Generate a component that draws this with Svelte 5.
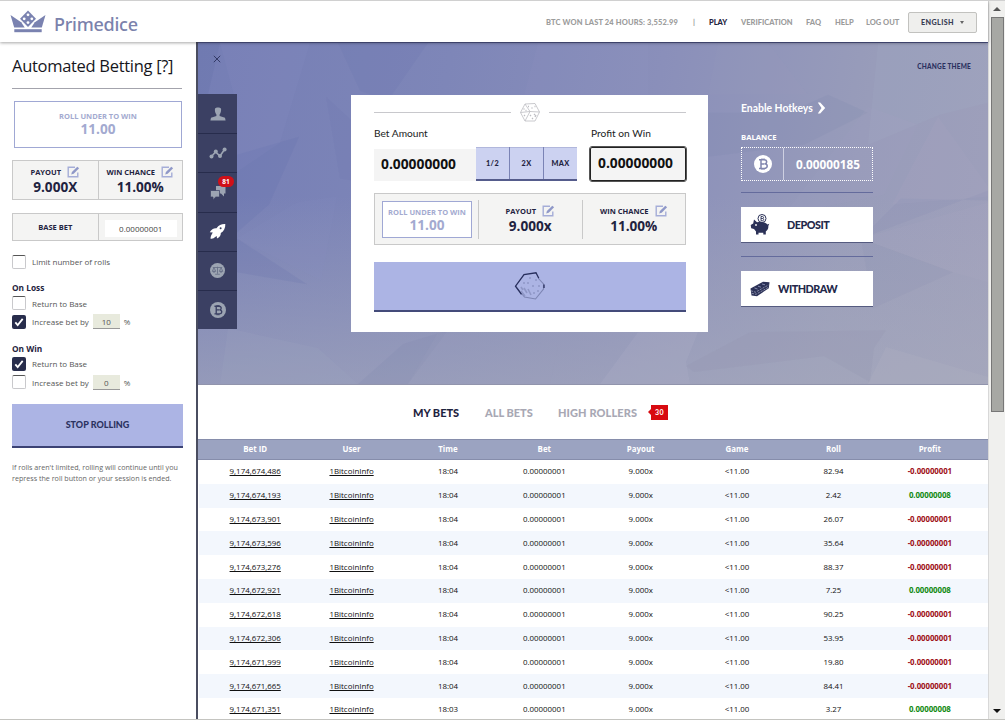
<script lang="ts">
  let lossReturn = $state(false);
  let lossIncrease = $state(true);
  let winReturn = $state(true);
  let winIncrease = $state(false);
  let limitRolls = $state(false);

  const columns = ["Bet ID", "User", "Time", "Bet", "Payout", "Game", "Roll", "Profit"];

  const bets = [
    { id: "9,174,674,486", time: "18:04", roll: "82.94", won: false },
    { id: "9,174,674,193", time: "18:04", roll: "2.42", won: true },
    { id: "9,174,673,901", time: "18:04", roll: "26.07", won: false },
    { id: "9,174,673,596", time: "18:04", roll: "35.64", won: false },
    { id: "9,174,673,276", time: "18:04", roll: "88.37", won: false },
    { id: "9,174,672,921", time: "18:04", roll: "7.25", won: true },
    { id: "9,174,672,618", time: "18:04", roll: "90.25", won: false },
    { id: "9,174,672,306", time: "18:04", roll: "53.95", won: false },
    { id: "9,174,671,999", time: "18:04", roll: "19.80", won: false },
    { id: "9,174,671,665", time: "18:04", roll: "84.41", won: false },
    { id: "9,174,671,351", time: "18:03", roll: "3.27", won: true },
  ];
</script>

{#snippet edit()}
  <svg viewBox="0 0 13 12" width="13" height="12">
    <path d="M8 1.2H1.2v9.6h9.6V6.5" fill="none" stroke="#a5add8" stroke-width="1.4" />
    <path d="M4.2 8.4l.7-2.4L10.3.7l1.8 1.6-5.4 5.4z" fill="#8f98c8" />
  </svg>
{/snippet}

{#snippet coin(size, fill, ink)}
  <svg viewBox="0 0 18 18" width={size} height={size}>
    <circle cx="9" cy="9" r="9" {fill} />
    <path
      d="M5 4.8h4.8c3.6 0 3.7 3.5 1 4 3.4.4 3.2 4.6-.6 4.6H5M7 4.8v8.6M7 8.9h3.4M8 3.4v1.4M10 3.4v1.4M8 13.4v1.4M10 13.4v1.4"
      fill="none"
      stroke={ink}
      stroke-width="1.5"
    />
  </svg>
{/snippet}

{#snippet check(on, toggle)}
  <button class="check" class:on onclick={toggle} aria-label="toggle">
    {#if on}
      <svg viewBox="0 0 14 14" width="14" height="14">
        <path d="M3.3 7.4l2.4 2.7 5-6.2" fill="none" stroke="#fff" stroke-width="1.8" />
      </svg>
    {/if}
  </button>
{/snippet}

<div class="window">
  <div class="page">
    <header>
      <svg viewBox="0 0 36 24" width="36" height="24">
        <g fill="#7a82b0">
          <path d="M.5 5l10.7 7.2 3.5 5.3H4.2z" />
          <path d="M35.5 5l-10.7 7.2-3.5 5.3h10.5z" />
          <path d="M18 .6l8 8.2-8 8.2-8-8.2z" />
          <path d="M4.3 19.2h27.400v3H4.300z" />
        </g>
        <g fill="#fff">
          <circle cx="18" cy="4.8" r="1.4" />
          <circle cx="14.2" cy="8.8" r="1.4" />
          <circle cx="21.8" cy="8.8" r="1.4" />
          <circle cx="18" cy="12.6" r="1.4" />
        </g>
      </svg>
      <span class="brand">Primedice</span>
      <nav>
        <span class="won">BTC WON LAST 24 HOURS: 3,552.99</span>
        <span class="bar">|</span>
        <span class="play">PLAY</span>
        <span class="verification">VERIFICATION</span>
        <span class="faq">FAQ</span>
        <span class="help">HELP</span>
        <span class="logout">LOG OUT</span>
      </nav>
      <button class="language">ENGLISH <i></i></button>
    </header>

    <div class="body">
      <aside>
        <h1>Automated Betting [?]</h1>

        <div class="target">
          <small>ROLL UNDER TO WIN</small>
          <b>11.00</b>
        </div>

        <div class="pair">
          <div class="stat">
            <small>PAYOUT {@render edit()}</small>
            <b>9.000X</b>
          </div>
          <div class="stat">
            <small>WIN CHANCE {@render edit()}</small>
            <b>11.00%</b>
          </div>
        </div>

        <div class="pair base">
          <small>BASE BET</small>
          <div class="base-value"><span>0.00000001</span></div>
        </div>

        <div class="option limit">
          {@render check(limitRolls, () => (limitRolls = !limitRolls))}
          <span>Limit number of rolls</span>
        </div>

        <h2>On Loss</h2>
        <div class="option">
          {@render check(lossReturn, () => (lossReturn = !lossReturn))}
          <span>Return to Base</span>
        </div>
        <div class="option">
          {@render check(lossIncrease, () => (lossIncrease = !lossIncrease))}
          <span>Increase bet by</span>
          <em>10</em>
          <span>%</span>
        </div>

        <h2 class="win">On Win</h2>
        <div class="option">
          {@render check(winReturn, () => (winReturn = !winReturn))}
          <span>Return to Base</span>
        </div>
        <div class="option">
          {@render check(winIncrease, () => (winIncrease = !winIncrease))}
          <span>Increase bet by</span>
          <em>0</em>
          <span>%</span>
        </div>

        <button class="stop">STOP ROLLING</button>
        <p>If rolls aren't limited, rolling will continue until you<br />repress the roll button or your session is ended.</p>
      </aside>

      <main>
        <section class="hero">
          <svg class="facets" viewBox="0 0 790 342" preserveAspectRatio="none">
            <path d="M0 0h22L8 60 0 110z" fill="#5d67a5" opacity=".25" />
            <path d="M22 0h90l-30 100-44 30V60z" fill="#8f97cc" opacity=".2" />
            <path d="M140 0h90l-40 58-28-10z" fill="#5c68a8" opacity=".16" />
            <path d="M39 112l62-18-30 68-32 28z" fill="#5c68a8" opacity=".22" />
            <path d="M39 196l60-36 40-6-16 84z" fill="#9198cb" opacity=".16" />
            <path d="M39 196l70 46-70-12z" fill="#5c68a8" opacity=".22" />
            <path d="M128 54l26 24v60l-12-2z" fill="#5c68a8" opacity=".13" />
            <path d="M340 0h110v52H326z" fill="#9b9bd0" opacity=".16" />
            <path d="M520 0h50l40 52H510z" fill="#a0a0c8" opacity=".14" />
            <path d="M680 0h110v60l-48 12-72 30z" fill="#a7b2ca" opacity=".25" />
            <path d="M510 70l80 0 40-18 40 18-64 32-96 12z" fill="#7180ac" opacity=".2" />
            <path d="M670 64l50 18-34 70-100 20z" fill="#b0abc9" opacity=".15" />
            <path d="M694 162l46-88 50 70v10z" fill="#b7b2cc" opacity=".18" />
            <path d="M663 196l40-40 87 2v-10z" fill="#7981ad" opacity=".18" />
            <path d="M663 196l92 34-80 36z" fill="#8589ad" opacity=".18" />
            <path d="M663 196l127-36v80l-35-10z" fill="#b9b4c9" opacity=".15" />
            <path d="M30 286l90 20 40 36H22z" fill="#a2abc7" opacity=".25" />
            <path d="M160 342l45-40 45-14-40 54z" fill="#7882ab" opacity=".24" />
            <path d="M240 290l120 14-8 38H210z" fill="#9a9dba" opacity=".28" />
            <path d="M440 290h60l-12 30 4 22h-90z" fill="#c2c3db" opacity=".2" />
            <path d="M488 324l64-34 136-2-12 18-4 34-46-26-130 16z" fill="#8f91ad" opacity=".25" />
            <path d="M688 305l102 30v7H670z" fill="#bcbbc8" opacity=".28" />
          </svg>

          <ul class="rail">
            <li>
              <svg viewBox="0 0 16 14" width="16" height="14" fill="#9ca4b2">
                <path d="M5 1.5C5.8 0 10.2 0 11 1.5c.4 2-.2 4.5-1.4 6V9l5.4 1.800.6 2.600H.4L1 10.800 6.400 9V7.500C5.200 6 4.600 3.500 5 1.500z" />
              </svg>
            </li>
            <li>
              <svg viewBox="0 0 18 12" width="18" height="12" fill="#9ca4b2">
                <path d="M2.5 9.500L6.500 5l4.500 4 4.500-6.500" fill="none" stroke="#9ca4b2" stroke-width="1.6" />
                <circle cx="2.5" cy="9.5" r="2" />
                <circle cx="6.8" cy="4.6" r="2" />
                <circle cx="11" cy="9" r="2" />
                <circle cx="15.6" cy="2.5" r="2" />
              </svg>
            </li>
            <li>
              <svg viewBox="0 0 16 15" width="16" height="15" fill="#9ca4b2">
                <path d="M6 1h9.500v7.500H14v3l-3-3H6z" />
                <path d="M.5 5.500h9v6.500H5.800L3 14.700V12H.5z" stroke="#3b4063" stroke-width=".7" />
              </svg>
              <span class="count">81</span>
            </li>
            <li>
              <svg viewBox="0 0 17 17" width="17" height="17" fill="#fff">
                <path d="M16.300 1c-3.600-.2-6.600 1-8.800 4.300C4.600 5 2.500 6.600.8 9.300l3 .1-1.400 2.700c-.7 1.200-.9 2.600-.8 3.700 1.300 0 2.800-.4 3.900-1.400l2.200-1.300.3 2.500c2.600-1.400 3.900-3.100 3.800-5.600C15 8.300 16.500 5 16.300 1z" />
                <circle cx="11.600" cy="5.300" r="1" fill="#3b4063" />
              </svg>
            </li>
            <li>
              <svg viewBox="0 0 16 16" width="15" height="15">
                <circle cx="8" cy="8" r="8" fill="#9ca4b2" />
                <path d="M3 4.800h10M8 4v7.500M5.500 12h5M4.200 5L2.500 8.800h3.600zM11.800 5l-1.800 3.800h3.600z" fill="none" stroke="#666e86" stroke-width=".9" />
                <path d="M2.400 8.800h3.800L5 10.200H3.500zM9.900 8.800h3.800l-1.200 1.400H11z" fill="#666e86" />
              </svg>
            </li>
            <li>{@render coin(16, "#9ca4b2", "#3b4063")}</li>
          </ul>

          <div class="close">
            <svg viewBox="0 0 8 8" width="8" height="8">
              <path d="M.8.8l6.400 6.400M7.200.8L.8 7.200" stroke="#333a66" stroke-width="1" />
            </svg>
          </div>

          <div class="card">
            <div class="rule">
              <svg viewBox="0 0 20 19" width="20" height="19" fill="none" stroke="#bdbdc2" stroke-width=".8">
                <path d="M5 1l10-.5L19.500 9 15 18H5L.5 9.500zM5 1l5 7.500L19.500 9M10 8.500L5 18M.5 9.500L10 8.500" />
                <path d="M8 3.500h1M11.500 5h1M14.500 3.500h1M3.500 6h1M5.500 7.500h1M10 12l1 1M12 15l1 1M14 11l1 1M4 12l1 1M16 12l-1 2" stroke-width="1.3" />
              </svg>
            </div>
            <div class="labels">
              <span class="bet-label">Bet Amount</span>
              <span>Profit on Win</span>
            </div>
            <div class="inputs">
              <div class="amount">0.00000000</div>
              <div class="multipliers">
                <button>1/2</button>
                <button>2X</button>
                <button>MAX</button>
              </div>
              <div class="profit">0.00000000</div>
            </div>
            <div class="stats">
              <div class="target">
                <small>ROLL UNDER TO WIN</small>
                <b>11.00</b>
              </div>
              <div class="stat">
                <small>PAYOUT {@render edit()}</small>
                <b>9.000x</b>
              </div>
              <div class="stat">
                <small>WIN CHANCE {@render edit()}</small>
                <b>11.00%</b>
              </div>
            </div>
            <button class="roll" aria-label="Roll">
              <svg viewBox="0 0 32 30" width="32" height="30" fill="none">
                <path d="M24.500 7.500l5 5.500v5L21.500 28l-11-2L1.500 15" stroke="#7d85b3" stroke-width="1.1" />
                <path d="M7.500 23.300L1.500 15.200 10 3.500l12-1.700 2.800 5.500M30 13.500v3.500" stroke="#272e5c" stroke-width="1.3" />
                <path
                  d="M15 7h2M21 9h2M13 12h2M18 15h2M24 15h2M9 12h2M23 20h2M19 22h2M7 16l2 3M10 17l3 5M14 18l3 6M7 20l4 5"
                  stroke="#8f97c6"
                  stroke-width="1.6"
                />
              </svg>
            </button>
          </div>

          <div class="account">
            <span class="theme">CHANGE THEME</span>
            <div class="hotkeys">
              <span>Enable Hotkeys</span>
              <svg viewBox="0 0 9 12" width="9" height="12">
                <path d="M.8.5h2.400L8.200 6l-5 5.500H.8L4.500 6z" fill="#fff" />
              </svg>
            </div>
            <div class="balance-label">BALANCE</div>
            <div class="balance">
              <div class="coin">{@render coin(18, "#fff", "#8085ae")}</div>
              <div class="value">0.00000185</div>
            </div>
            <button class="cash deposit">
              <svg viewBox="0 0 20 21" width="20" height="21">
                <circle cx="12" cy="4.500" r="4" fill="#fff" stroke="#2b3157" />
                <path d="M11 2.500h1.500c1.400 0 1.400 2 0 2 1.600 0 1.600 2.200 0 2.200H11zM11 4.500h1.500" fill="none" stroke="#2b3157" stroke-width=".9" />
                <path d="M4 5.500l3 2.700c3-.6 8-.6 10.500 2.300l1.800-.8-1 2.400c.3 2.400-.8 4.200-2.500 5.400v3h-2.500v-1.800H8.500v1.800H6v-3L4 15l-2.800-.8L.7 11l2.500-1.500z" fill="#2b3157" />
                <circle cx="6" cy="11" r=".9" fill="#fff" />
              </svg>
              <span>DEPOSIT</span>
            </button>
            <button class="cash withdraw">
              <svg viewBox="0 0 20 16" width="20" height="16">
                <path d="M.5 7.500L13 .8l6.500.4-.7 6L7 15.200l-5.500-.7z" fill="#2b3157" />
                <path d="M1 9.800l4.500 1.400L18.500 4M1.800 12.300l4.200 1L18.500 6.300" fill="none" stroke="#c3c6da" stroke-width=".6" stroke-dasharray="2.200 1" />
                <path d="M4.500 7l3 1M8 5.200l3 1M12 3l3 .8" stroke="#8f94b8" stroke-width=".9" />
              </svg>
              <span>WITHDRAW</span>
            </button>
          </div>
        </section>

        <div class="tabs">
          <span class="mine">MY BETS</span>
          <span class="all">ALL BETS</span>
          <span class="high">HIGH ROLLERS</span>
          <span class="flag">30</span>
        </div>

        <div class="table">
          <div class="row head">
            {#each columns as column}
              <span>{column}</span>
            {/each}
          </div>
          {#each bets as bet}
            <div class="row">
              <span><u>{bet.id}</u></span>
              <span><u>1BitcoinInfo</u></span>
              <span>{bet.time}</span>
              <span>0.00000001</span>
              <span>9.000x</span>
              <span>&lt;11.00</span>
              <span>{bet.roll}</span>
              <span class={bet.won ? "gain" : "loss"}>{bet.won ? "0.00000008" : "-0.00000001"}</span>
            </div>
          {/each}
        </div>
      </main>
    </div>
  </div>

  <div class="scrollbar">
    <svg viewBox="0 0 8 4" width="8" height="4"><path d="M0 4l4-4 4 4z" fill="#555" /></svg>
    <div class="thumb"></div>
    <svg viewBox="0 0 8 4" width="8" height="4"><path d="M0 0l4 4 4-4z" fill="#111" /></svg>
  </div>
</div>

<style>
  :global(body) {
    background: #fff;
    overflow: hidden;
  }
  * {
    box-sizing: border-box;
  }
  svg {
    display: block;
    flex: none;
  }
  button {
    padding: 0;
    border: none;
    border-radius: 0;
    font: inherit;
    color: inherit;
  }
  .window {
    display: flex;
    width: 1005px;
    height: 720px;
    overflow: hidden;
    border-top: 1px solid #d0d0d0;
    border-bottom: 1px solid #c4c4c0;
    font-family: "Open Sans", sans-serif;
    color: #1f2340;
  }
  .page {
    width: 988px;
    display: flex;
    flex-direction: column;
  }

  header {
    height: 41px;
    flex: none;
    display: flex;
    align-items: center;
    padding: 0 11px 0 10px;
    position: relative;
    box-shadow: 0 1px 3px rgba(0, 0, 0, 0.35);
    z-index: 1;
    background: #fff;
  }
  .brand {
    margin-left: 8px;
    margin-top: 4px;
    font: 500 18px/24px "Noto Sans", sans-serif;
    letter-spacing: -0.25px;
    color: #7b82ac;
  }
  nav {
    display: flex;
    margin-left: auto;
    font: 900 7.5px/12px Lato, sans-serif;
    color: #9c9c9c;
    white-space: nowrap;
    padding-top: 2px;
  }
  .won {
    width: 147px;
    letter-spacing: 0.15px;
  }
  .bar {
    width: 16px;
  }
  .play {
    width: 32px;
    color: #1f2340;
  }
  .verification {
    width: 65px;
  }
  .faq {
    width: 29px;
  }
  .help {
    width: 31px;
  }
  .logout {
    width: 42px;
  }
  .language {
    width: 69px;
    height: 21px;
    margin-top: 2px;
    border: 1px solid #c2c2bf;
    border-radius: 2px;
    background: #efefed;
    font: 900 7.2px/12px Lato, sans-serif;
    letter-spacing: 0.4px;
    display: flex;
    align-items: center;
    justify-content: center;
    gap: 6px;
    color: #3a3d55;
  }
  .language i {
    border: 2.5px solid transparent;
    border-top: 3px solid #666;
    border-bottom: none;
  }

  .body {
    flex: 1;
    min-height: 0;
    display: flex;
  }
  aside {
    width: 198px;
    flex: none;
    padding: 12px 14px 0 12px;
    border-right: 2px solid #4a4d60;
  }
  h1 {
    margin: 0 0 12px;
    height: 35px;
    border-bottom: 1px solid #a3a3ac;
    font-size: 16.5px;
    font-weight: 400;
    letter-spacing: -0.3px;
    line-height: 23px;
    color: #16161c;
    white-space: nowrap;
  }
  small {
    display: flex;
    align-items: center;
    justify-content: center;
    font-size: 7.5px;
    font-weight: 700;
    line-height: 10px;
    white-space: nowrap;
  }
  b {
    display: block;
    font-size: 13.6px;
    line-height: 16px;
    text-align: center;
  }
  .target {
    border: 1px solid #a0a8d4;
    background: #fff;
    color: #a3aad0;
    display: flex;
    flex-direction: column;
    align-items: center;
  }
  aside .target {
    height: 47px;
    margin: 0 0 12px 2px;
    padding-top: 9px;
    width: 168px;
  }
  .pair {
    display: flex;
    width: 171px;
    height: 40px;
    border: 1px solid #c9c9c9;
    background: #f4f4f3;
  }
  .pair > * {
    width: 50%;
  }
  .pair > * + * {
    border-left: 1px solid #c9c9c9;
  }
  .stat small {
    height: 14px;
    gap: 6px;
  }
  .pair .stat {
    padding-top: 4px;
  }
  .pair .stat b {
    line-height: 15px;
  }
  .base {
    height: 28px;
    margin-top: 13px;
    margin-bottom: 13px;
  }
  .base-value {
    padding: 6px 5px 3px 6px;
    display: flex;
  }
  .base-value span {
    flex: 1;
    background: #fff;
    font-size: 8px;
    line-height: 18px;
    text-align: center;
    color: #444;
  }
  .option {
    display: flex;
    align-items: center;
    height: 18.5px;
    font-size: 8px;
    color: #555;
    white-space: nowrap;
  }
  .option.limit {
    height: 15px;
  }
  .check {
    width: 14px;
    height: 14px;
    flex: none;
    margin-right: 6px;
    border: 1px solid #c9c9cc;
    border-top-color: #555;
    border-radius: 2px;
    background: #fff;
  }
  .check.on {
    border: none;
    background: #282d4c;
  }
  .option em {
    width: 27px;
    height: 15px;
    margin: 0 4px;
    background: #e8eadd;
    border-bottom: 1px solid #999;
    font-style: normal;
    line-height: 15px;
    text-align: center;
  }
  h2 {
    margin: 13px 0 0;
    font-size: 8.3px;
    line-height: 12px;
    color: #1f2340;
  }
  h2.win {
    margin-top: 11.5px;
  }
  .stop {
    display: block;
    width: 171px;
    height: 44px;
    margin-top: 12px;
    background: #acb4e4;
    border-bottom: 2px solid #3b4274;
    font: 900 9px/42px Lato, sans-serif;
    color: #2b3260;
  }
  p {
    margin: 14px 0 0;
    font-size: 7.15px;
    line-height: 11px;
    color: #666;
    white-space: nowrap;
  }

  main {
    width: 790px;
  }
  .hero {
    position: relative;
    height: 343px;
    display: flex;
    border-top: 1px solid #4e5588;
    border-bottom: 1px solid #9194ac;
    background:
      linear-gradient(180deg, rgba(160, 168, 190, 0) 45%, rgba(168, 171, 188, 0.6) 100%),
      linear-gradient(100deg, #757eb5 0%, #7e86b8 30%, #8a8fba 55%, #989cba 80%, #9fa0bb 100%);
  }
  .facets {
    position: absolute;
    inset: 0;
    width: 100%;
    height: 100%;
    opacity: 0.65;
  }
  .hero > div {
    position: relative;
  }
  .rail {
    position: relative;
    list-style: none;
    margin: 51px 0 0;
    padding: 0;
    width: 39px;
    height: 235px;
    display: flex;
    flex-direction: column;
    background: #3b4063;
  }
  .rail li {
    position: relative;
    flex: 1;
    display: flex;
    align-items: center;
    justify-content: center;
    border-top: 1px solid #272c4c;
  }
  .rail li:first-child {
    border-top-color: #3b4063;
  }
  .count {
    position: absolute;
    top: 3px;
    left: 20px;
    width: 16px;
    height: 11px;
    border-radius: 6px;
    background: #d01018;
    color: #fff;
    font: 700 6.5px/11px "Open Sans", sans-serif;
    text-align: center;
  }
  .close {
    width: 114px;
    margin-left: -24px;
    margin-right: 24px;
    padding-top: 12px;
  }
  .card {
    width: 357px;
    height: 237px;
    margin-top: 52px;
    padding: 7px 22px 0 23px;
    background: #fff;
    flex: none;
  }
  .rule {
    display: flex;
    align-items: center;
    gap: 9px;
    height: 20px;
  }
  .rule::before,
  .rule::after {
    content: "";
    flex: 1;
    border-top: 1px solid #c8c8cc;
  }
  .labels {
    display: flex;
    margin-top: 3px;
    height: 22px;
    font: 400 10.2px/16px Lato, sans-serif;
    color: #222;
    white-space: nowrap;
  }
  .bet-label {
    width: 217px;
  }
  .inputs {
    display: flex;
    height: 34px;
  }
  .amount,
  .profit {
    background: #f4f4f4;
    font-size: 13.8px;
    font-weight: 700;
    line-height: 30px;
    color: #111;
  }
  .amount {
    width: 102px;
    height: 32px;
    margin-top: 2px;
    padding-left: 7px;
  }
  .multipliers {
    width: 101px;
    display: flex;
    gap: 1px;
    background: #7a83b5;
    border-bottom: 2px solid #555c8c;
    margin-right: 13px;
  }
  .multipliers button {
    flex: 1;
    background: #ccd2f1;
    border-top: 1px solid #b1b7dc;
    font: 900 7.3px/32px Lato, sans-serif;
    letter-spacing: 0.4px;
  }
  .profit {
    width: 96px;
    border: 1.5px solid #222;
    outline: 0.5px solid #555;
    border-radius: 2px;
    padding-left: 7px;
  }
  .stats {
    display: flex;
    margin-top: 12px;
    height: 52px;
    padding: 6px 0 5px 7px;
    border: 1px solid #c9c9c9;
    background: #f4f4f3;
  }
  .stats .target {
    width: 90px;
    height: 37px;
    margin: 1px 6px 0 0;
    padding-top: 5px;
  }
  .stats .target b {
    line-height: 15px;
  }
  .stats .stat {
    flex: 1;
    border-left: 1px solid #c9c9c9;
    padding-top: 4px;
  }
  .roll {
    display: flex;
    justify-content: center;
    width: 312px;
    height: 50px;
    margin-top: 17px;
    padding-top: 9px;
    background: #acb4e4;
    border-bottom: 2px solid #444b7a;
  }

  .account {
    flex: 1;
    margin-left: 33px;
    color: #fff;
  }
  .theme {
    display: block;
    margin: 18px 17px 0 0;
    font: 900 6.5px/11px Lato, sans-serif;
    letter-spacing: 0.2px;
    text-align: right;
    color: #2b3160;
  }
  .hotkeys {
    display: flex;
    align-items: center;
    gap: 4px;
    margin-top: 27px;
    height: 18px;
    font: 700 10.4px/18px Lato, sans-serif;
  }
  .balance-label {
    margin-top: 14px;
    font-size: 7.7px;
    font-weight: 700;
    line-height: 12px;
  }
  .balance {
    display: flex;
    width: 132px;
    height: 34px;
    margin-top: 4px;
    border: 1px dotted #fff;
  }
  .balance .coin {
    width: 42px;
    display: flex;
    align-items: center;
    justify-content: center;
    border-right: 1px solid #ced0e2;
  }
  .balance .value {
    flex: 1;
    font-size: 11.8px;
    font-weight: 700;
    line-height: 32px;
    text-align: center;
  }
  .cash {
    position: relative;
    display: flex;
    align-items: center;
    width: 132px;
    height: 36px;
    margin-top: 26px;
    padding-left: 9px;
    background: #fff;
    border-bottom: 1px solid #555b80;
    font: 900 10.8px/34px Lato, sans-serif;
    letter-spacing: -0.5px;
    color: #23284a;
  }
  .withdraw {
    margin-top: 28px;
  }
  .cash::before {
    content: "";
    position: absolute;
    left: 0;
    right: 0;
    top: -15px;
    border-top: 1px solid #646b9c;
  }
  .deposit span {
    margin-left: 17px;
  }
  .withdraw span {
    margin-left: 8px;
  }

  .tabs {
    display: flex;
    align-items: center;
    height: 54px;
    padding-left: 215px;
    padding-top: 1px;
    font: 900 11px/16px Lato, sans-serif;
    color: #a8a8b4;
    white-space: nowrap;
  }
  .mine {
    width: 72px;
    color: #1f2340;
  }
  .all {
    width: 73px;
  }
  .high {
    width: 93px;
    letter-spacing: 0.1px;
  }
  .flag {
    position: relative;
    width: 17px;
    height: 15px;
    background: #d80a10;
    color: #fff;
    font: 700 7px/15px Lato, sans-serif;
    letter-spacing: 0.5px;
    text-align: center;
  }
  .flag::before {
    content: "";
    position: absolute;
    left: -3px;
    top: 4px;
    border: 3.5px solid transparent;
    border-right: 3px solid #d80a10;
    border-left: none;
  }
  .row {
    display: grid;
    grid-template-columns: repeat(8, 1fr);
    align-items: center;
    height: 23.8px;
    margin-left: 1px;
    padding: 0 10px 0 8px;
    font-size: 7.9px;
    line-height: 11px;
    text-align: center;
    color: #111;
  }
  .row:nth-child(odd) {
    background: #f3f7fd;
  }
  .row.head {
    height: 21px;
    margin-left: 0;
    padding-left: 9px;
    background: #9ba3c1;
    border-top: 1px solid #868dab;
    border-bottom: 1px solid #868dab;
    font-weight: 700;
    color: #fff;
  }
  u {
    text-underline-offset: 1px;
    text-decoration-thickness: 1px;
    text-decoration-skip-ink: none;
  }
  .gain {
    color: #128a12;
    font-weight: 700;
    letter-spacing: -0.1px;
  }
  .loss {
    color: #9e1018;
    font-weight: 700;
    letter-spacing: -0.1px;
  }

  .scrollbar {
    width: 17px;
    display: flex;
    flex-direction: column;
    align-items: center;
    justify-content: space-between;
    padding: 6px 0;
    border-left: 1px solid #d8d8d8;
    background: #f0f0ee;
  }
  .thumb {
    width: 13px;
    height: 395px;
    margin-top: 6px;
    margin-bottom: auto;
    background: #a7a8a4;
    border: 1px solid #777;
  }
</style>
